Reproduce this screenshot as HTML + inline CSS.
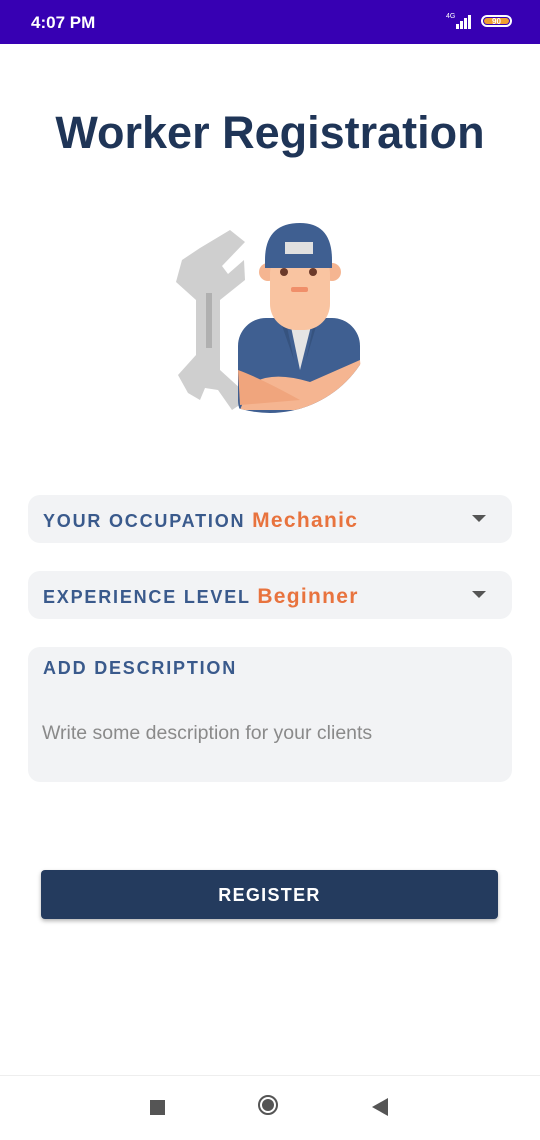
<!DOCTYPE html>
<html><head><style>
body{margin:0;width:540px;height:1140px;background:#fff;font-family:"Liberation Sans",sans-serif;position:relative;overflow:hidden}
.sb{position:absolute;left:0;top:0;width:540px;height:44px;background:#3700b3;color:#fff}
.box{position:absolute;left:28px;width:484px;background:#f2f3f5;border-radius:12px}
.lbl{position:absolute;left:15px;font-size:18px;font-weight:bold;letter-spacing:1.8px;color:#3a5a8c}
.val{color:#e8733e;font-size:21px;letter-spacing:1.3px}
.arr{position:absolute;right:26px;width:0;height:0;border-left:7px solid transparent;border-right:7px solid transparent;border-top:7px solid #555}
</style></head><body>
<div class="sb">
<div style="position:absolute;left:31px;top:13px;font-size:17px;font-weight:bold">4:07 PM</div>
<div style="position:absolute;left:446px;top:13px;font-size:7px">4G</div>
<div style="position:absolute;left:456px;top:15px;width:18px;height:14px">
<div style="position:absolute;left:0;bottom:0;width:3px;height:5px;background:#fff"></div>
<div style="position:absolute;left:4px;bottom:0;width:3px;height:8px;background:#fff"></div>
<div style="position:absolute;left:8px;bottom:0;width:3px;height:11px;background:#fff"></div>
<div style="position:absolute;left:12px;bottom:0;width:3px;height:14px;background:#fff"></div></div>
<div style="position:absolute;left:481px;top:15px;width:31px;height:12px;border:2px solid #fff;border-radius:8px;box-sizing:border-box;padding:1px">
<div style="background:#f0a030;border-radius:5px;height:100%;font-size:8px;font-weight:bold;text-align:center;line-height:8px;color:#fff">90</div></div>
</div>
<div style="position:absolute;left:0;top:107px;width:540px;text-align:center;font-size:45px;font-weight:bold;color:#1f3557">Worker Registration</div>
<svg style="position:absolute;left:160px;top:210px" width="220" height="210" viewBox="0 0 220 210">
<defs><clipPath id="c"><circle cx="110" cy="95" r="108"/></clipPath></defs>
<path d="M70 20 L85 32 L62 56 L68 64 L84 50 L85 70 L60 90 L60 160 L82 180 L84 192 L72 200 L65 190 L58 180 L45 178 L40 190 L28 183 L18 165 L36 145 L36 90 L16 72 L22 50 L40 38 Z" fill="#cfcfcf"/>
<rect x="46" y="83" width="6" height="55" fill="#b0b0b0"/>
<g clip-path="url(#c)">
<rect x="78" y="108" width="122" height="110" rx="28" fill="#3f5f91"/>
<path d="M130 112 L140 160 L152 112 Z" fill="#e4e4e4"/>
<path d="M120 110 L134 150 L126 112 Z M158 110 L146 150 L154 112 Z" fill="#36537f"/>
<path d="M90 175 Q110 160 150 172 L200 150 L205 200 L80 200 Z" fill="#f5b591"/>
<path d="M78 160 Q100 168 140 190 L80 195 Z" fill="#f0a57d"/>
</g>
<circle cx="108" cy="62" r="9" fill="#f5b591"/><circle cx="172" cy="62" r="9" fill="#f5b591"/>
<rect x="110" y="38" width="60" height="82" rx="26" fill="#f9c4a1"/>
<rect x="128" y="95" width="24" height="22" fill="#f9c4a1"/>
<path d="M105 50 Q105 13 140 13 Q172 13 172 50 L172 58 L105 58 Z" fill="#3f5f91"/>
<rect x="125" y="32" width="28" height="12" fill="#e0e0e0"/>
<circle cx="124" cy="62" r="4" fill="#6b3a2a"/><circle cx="153" cy="62" r="4" fill="#6b3a2a"/>
<rect x="131" y="77" width="17" height="5" rx="2" fill="#f08f6a"/>
</svg>
<div class="box" style="top:495px;height:48px"><div class="lbl" style="top:14px">YOUR OCCUPATION <span class="val">Mechanic</span></div><div class="arr" style="top:20px"></div></div>
<div class="box" style="top:571px;height:48px"><div class="lbl" style="top:14px">EXPERIENCE LEVEL <span class="val">Beginner</span></div><div class="arr" style="top:20px"></div></div>
<div class="box" style="top:647px;height:135px"><div class="lbl" style="top:11px">ADD DESCRIPTION</div>
<div style="position:absolute;left:14px;top:75px;font-size:19.5px;color:#8a8a8a">Write some description for your clients</div></div>
<div style="position:absolute;left:41px;top:870px;width:457px;height:49px;background:#243b5e;border-radius:4px;box-shadow:0 2px 4px rgba(0,0,0,.3);color:#fff;font-size:18px;font-weight:bold;letter-spacing:1.3px;text-align:center;line-height:50px">REGISTER</div>
<div style="position:absolute;left:0;top:1075px;width:540px;height:1px;background:#eee"></div>
<div style="position:absolute;left:150px;top:1100px;width:15px;height:15px;background:#555"></div>
<div style="position:absolute;left:258px;top:1095px;width:20px;height:20px;border:2.5px solid #555;border-radius:50%;box-sizing:border-box;padding:2px"><div style="width:100%;height:100%;background:#555;border-radius:50%"></div></div>
<div style="position:absolute;left:372px;top:1098px;width:0;height:0;border-top:9px solid transparent;border-bottom:9px solid transparent;border-right:16px solid #555"></div>
</body></html>
